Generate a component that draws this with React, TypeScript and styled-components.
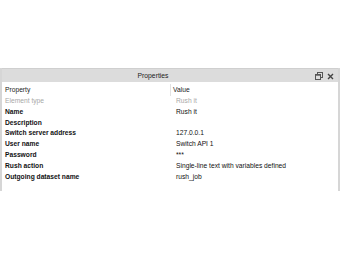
import { Fragment } from "react";
import styled, { createGlobalStyle } from "styled-components";

const GlobalStyle = createGlobalStyle`
  html, body {
    margin: 0;
    padding: 0;
    background: #ffffff;
  }
  body {
    font-family: "Liberation Sans", Arial, sans-serif;
  }
`;

interface Row {
  name: string;
  value: string;
  disabled?: boolean;
}

const rows: Row[] = [
  { name: "Element type", value: "Rush it", disabled: true },
  { name: "Name", value: "Rush it" },
  { name: "Description", value: "" },
  { name: "Switch server address", value: "127.0.0.1" },
  { name: "User name", value: "Switch API 1" },
  { name: "Password", value: "***" },
  { name: "Rush action", value: "Single-line text with variables defined" },
  { name: "Outgoing dataset name", value: "rush_job" },
];

const App = () => {
  return (
    <Page>
      <GlobalStyle />
      <Panel>
        <TitleBar>
          <Title>Properties</Title>
          <TitleButtons>
            <svg width="8" height="8" viewBox="0 0 8 8">
              <rect x="2.5" y="0.5" width="5" height="5" fill="none" stroke="#555" />
              <rect x="0.5" y="2.5" width="5" height="5" fill="#dcdcdc" stroke="#555" />
              <rect x="0.5" y="2.5" width="5" height="1.2" fill="#555" />
            </svg>
            <svg width="7" height="7" viewBox="0 0 7 7">
              <path d="M1 1 L6 6 M6 1 L1 6" stroke="#444" strokeWidth="1.4" />
            </svg>
          </TitleButtons>
        </TitleBar>
        <Grid>
          <HeadCell>Property</HeadCell>
          <HeadCell $divider>Value</HeadCell>
          {rows.map((r) => (
            <Fragment key={r.name}>
              <NameCell $disabled={r.disabled}>{r.name}</NameCell>
              <ValueCell $disabled={r.disabled}>{r.value}</ValueCell>
            </Fragment>
          ))}
        </Grid>
      </Panel>
    </Page>
  );
};
export default App;

const Page = styled.div`
  width: 340px;
  height: 260px;
  padding-top: 68px;
  box-sizing: border-box;
  background: #ffffff;
`;
const Panel = styled.div`
  width: 340px;
  height: 123px;
  border-left: 2px solid #d6d6d6;
  border-right: 2px solid #d6d6d6;
  box-sizing: border-box;
  display: flex;
  flex-direction: column;
`;
const TitleBar = styled.div`
  height: 13px;
  background: #dcdcdc;
  border-top: 1px solid #cfcfcf;
  position: relative;
  display: flex;
  align-items: center;
  justify-content: center;
  padding-right: 34px;
`;
const Title = styled.span`
  font-size: 6.8px;
  color: #222;
`;
const TitleButtons = styled.div`
  position: absolute;
  right: 4px;
  top: 3px;
  display: flex;
  gap: 4px;
  align-items: center;
`;
const Grid = styled.div`
  display: grid;
  grid-template-columns: 168px 1fr;
  grid-template-rows: 12px;
  grid-auto-rows: 10.8px;
  padding-top: 2px;
  font-size: 6.7px;
  line-height: 10.8px;
`;
const HeadCell = styled.div<{ $divider?: boolean }>`
  color: #222;
  padding-left: ${(p) => (p.$divider ? "2px" : "3px")};
  border-left: ${(p) => (p.$divider ? "1px solid #e2e2e2" : "none")};
  line-height: 12px;
`;
const NameCell = styled.div<{ $disabled?: boolean }>`
  padding-left: 3px;
  font-weight: ${(p) => (p.$disabled ? "normal" : "bold")};
  color: ${(p) => (p.$disabled ? "#a8a8a8" : "#111")};
  white-space: nowrap;
`;
const ValueCell = styled.div<{ $disabled?: boolean }>`
  padding-left: 6px;
  color: ${(p) => (p.$disabled ? "#a8a8a8" : "#111")};
  white-space: nowrap;
`;
